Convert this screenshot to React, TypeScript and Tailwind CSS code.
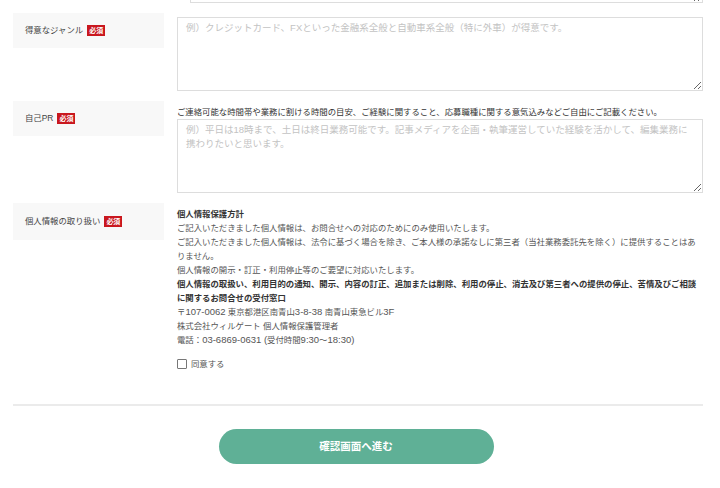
const font = { fontFamily: '"Liberation Sans", "Noto Sans CJK JP", sans-serif' };

function Badge() {
  return (
    <span className="ml-[4px] inline-flex h-[11px] items-center bg-[#c9171e] px-[2px] text-[7px] font-bold leading-none text-white">
      必須
    </span>
  );
}

function Label({ text }: { text: string }) {
  return (
    <div className="flex h-[35px] w-[151px] shrink-0 items-center bg-[#f8f8f8] pl-3 text-[8.4px] text-[#444]">
      {text}
      <Badge />
    </div>
  );
}

function Area({ placeholder }: { placeholder?: string }) {
  return (
    <textarea
      placeholder={placeholder}
      className="block h-[74px] w-full resize-y border border-[#ddd] bg-white px-2 pt-[3px] text-[9.5px] leading-[14px] text-[#333] outline-none placeholder:text-[#c3c3c3]"
      style={font}
    />
  );
}

export default function App() {
  return (
    <div className="min-h-[488px] overflow-hidden bg-white" style={font}>
      <div className="ml-[13px] w-[690px]">
        <div className="-mt-[71px] ml-[164px] pl-[13px]">
          <Area />
        </div>

        <div className="mt-[10px] flex gap-[13px]">
          <Label text="得意なジャンル" />
          <div className="flex-1 pt-1">
            <Area placeholder="例）クレジットカード、FXといった金融系全般と自動車系全般（特に外車）が得意です。" />
          </div>
        </div>

        <div className="mt-[10px] flex gap-[13px]">
          <Label text="自己PR" />
          <div className="flex-1 pt-1">
            <p className="text-[8.4px] leading-[14px] text-[#333]">
              ご連絡可能な時間帯や業務に割ける時間の目安、ご経験に関すること、応募職種に関する意気込みなどご自由にご記載ください。
            </p>
            <Area placeholder="例）平日は18時まで、土日は終日業務可能です。記事メディアを企画・執筆運営していた経験を活かして、編集業務に携わりたいと思います。" />
          </div>
        </div>

        <div className="mt-[10px] flex gap-[13px]">
          <div className="self-start">
            <div className="flex h-[37px] w-[151px] items-center bg-[#f8f8f8] pl-3 text-[8.4px] text-[#444]">
              個人情報の取り扱い
              <Badge />
            </div>
          </div>
          <div className="flex-1 pt-1 text-[8.4px] leading-[14px] text-[#555]">
            <p className="font-bold text-[#333]">個人情報保護方計</p>
            <p>ご記入いただきました個人情報は、お問合せへの対応のためにのみ使用いたします。</p>
            <p>
              ご記入いただきました個人情報は、法令に基づく場合を除き、ご本人様の承諾なしに第三者（当社業務委託先を除く）に提供することはありません。
            </p>
            <p>個人情報の開示・訂正・利用停止等のご要望に対応いたします。</p>
            <p className="font-bold text-[#333]">
              個人情報の取扱い、利用目的の通知、開示、内容の訂正、追加または削除、利用の停止、消去及び第三者への提供の停止、苦情及びご相談に関するお問合せの受付窓口
            </p>
            <p className="text-[#555]">
              〒<span className="text-[9.5px]">107-0062</span> 東京都港区南青山<span className="text-[9.5px]">3-8-38</span> 南青山東急ビル<span className="text-[9.5px]">3F</span>
            </p>
            <p>株式会社ウィルゲート 個人情報保護管理者</p>
            <p>
              電話：<span className="text-[9.5px]">03-6869-0631 (</span>受付時間<span className="text-[9.5px]">9:30</span>〜<span className="text-[9.5px]">18:30)</span>
            </p>
            <label className="mt-[10px] flex items-center gap-[4px] text-[#555]">
              <span className="block h-[10px] w-[10px] rounded-[1px] border border-[#777] bg-white" />
              同意する
            </label>
          </div>
        </div>

        <div className="mt-[33px] h-[2px] bg-[#ebebeb]" />

        <div className="mt-[23px] flex justify-center pr-[4px]">
          <button className="h-[35px] w-[275px] rounded-full bg-[#5fb096] text-[10.5px] font-bold text-white">
            確認画面へ進む
          </button>
        </div>
      </div>
    </div>
  );
}
